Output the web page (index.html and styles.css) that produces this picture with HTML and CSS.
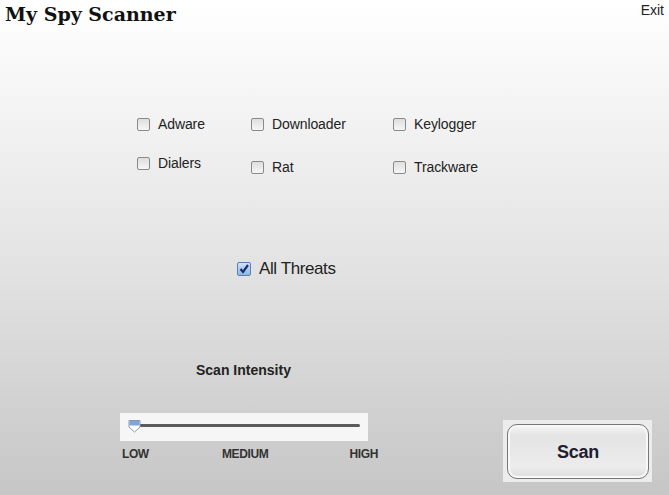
FILE: index.html
```html
<!DOCTYPE html>
<html lang="en">
<head>
    <meta charset="UTF-8">
    <meta name="viewport" content="width=device-width, initial-scale=1.0">
    <title>My Spy Scanner</title>
    <link rel="stylesheet" href="styles.css">
</head>
<body>
    <div class="page">
        <div class="top">
            <h1 class="title">My Spy Scanner</h1>
            <span class="exit">Exit</span>
        </div>

        <div class="threats">
            <label class="opt"><span class="box"></span>Adware</label>
            <label class="opt"><span class="box"></span>Downloader</label>
            <label class="opt"><span class="box"></span>Keylogger</label>
            <label class="opt raised"><span class="box"></span>Dialers</label>
            <label class="opt"><span class="box"></span>Rat</label>
            <label class="opt"><span class="box"></span>Trackware</label>
        </div>

        <label class="all">
            <span class="box checked">
                <svg width="10" height="10" viewBox="0 0 10 10"><path d="M1.5 5 L4 8 L9 1" fill="none" stroke="#1c2f6e" stroke-width="2.2"/></svg>
            </span>
            All Threats
        </label>

        <div class="intensity">Scan Intensity</div>

        <div class="bottom">
            <div class="slider">
                <div class="panel">
                    <div class="track"></div>
                    <svg class="thumb" width="13" height="14" viewBox="0 0 13 14">
                        <path d="M1 1.5 H12 V8 L6.5 13 L1 8 Z" fill="#fff" stroke="#8a97aa" stroke-width="1"/>
                        <path d="M1.5 2 H11.5 V6.5 H1.5 Z" fill="#7fa6dc"/>
                    </svg>
                </div>
                <div class="scale">
                    <span>LOW</span>
                    <span>MEDIUM</span>
                    <span class="high">HIGH</span>
                </div>
            </div>
            <div class="btn-wrap">
                <button class="scan">Scan</button>
            </div>
        </div>
    </div>
</body>
</html>
```

FILE: styles.css
```css
body {
    margin: 0;
    font-family: "Liberation Sans", Arial, sans-serif;
    color: #222;
}

.page {
    width: 669px;
    height: 495px;
    background: linear-gradient(#ffffff 0%, #f2f2f2 25%, #e2e2e2 55%, #c6c6c6 100%);
    overflow: hidden;
}

.top {
    display: flex;
    justify-content: space-between;
    height: 30px;
    padding: 0 5px;
}

.title {
    margin: 2px 0 0 0;
    font-family: "DejaVu Serif", "Liberation Serif", serif;
    font-weight: bold;
    font-size: 19px;
    line-height: 24px;
    color: #111;
}

.exit {
    margin-top: 2px;
    font-size: 14px;
    color: #222;
}

.threats {
    display: grid;
    grid-template-columns: 114px 142px auto;
    row-gap: 25px;
    margin: 85px 0 0 137px;
}

.opt {
    display: flex;
    align-items: center;
    gap: 8px;
    height: 18px;
    font-size: 14px;
    letter-spacing: -0.1px;
    color: #222;
}

.raised {
    margin-top: -4px;
}

.box {
    display: inline-flex;
    align-items: center;
    justify-content: center;
    box-sizing: border-box;
    width: 13px;
    height: 13px;
    border: 1px solid #8a8a8a;
    border-radius: 2px;
    background: linear-gradient(#dedede, #f6f6f6);
}

.box.checked {
    width: 14px;
    height: 14px;
    border-color: #5a7fb5;
    background: linear-gradient(#cfe3f8, #8fb6e6);
}

.all {
    display: flex;
    align-items: center;
    gap: 8px;
    height: 18px;
    margin: 84px 0 0 237px;
    font-size: 17px;
    letter-spacing: -0.4px;
    color: #222;
}

.intensity {
    margin: 84px 0 0 196px;
    height: 18px;
    font-size: 14px;
    font-weight: bold;
    color: #222;
}

.bottom {
    display: flex;
    align-items: flex-start;
    margin-top: 33px;
}

.slider {
    width: 248px;
    margin-left: 120px;
}

.panel {
    position: relative;
    height: 28px;
    background: #f6f6f6;
}

.track {
    position: absolute;
    left: 12px;
    right: 8px;
    top: 11px;
    height: 3px;
    border-radius: 2px;
    background: #5c5c5c;
}

.thumb {
    position: absolute;
    left: 8px;
    top: 6px;
}

.scale {
    display: grid;
    grid-template-columns: 100px auto 1fr;
    width: 256px;
    margin-top: 6px;
    padding-left: 2px;
    font-size: 12px;
    font-weight: bold;
    letter-spacing: -0.4px;
    color: #333;
}

.high {
    justify-self: end;
}

.btn-wrap {
    margin: 7px 0 0 135px;
    padding: 4px 3px 3px 4px;
    background: #ececec;
}

.scan {
    display: block;
    width: 142px;
    height: 55px;
    padding-top: 3px;
    border: 1px solid #777;
    border-radius: 10px;
    background: linear-gradient(#f6f6f6 0%, #e4e4e4 20%, #ececec 80%, #dcdcdc 100%);
    box-shadow: inset 0 0 0 2px #f8f8f8;
    font-family: "Liberation Sans", Arial, sans-serif;
    font-size: 18px;
    font-weight: bold;
    letter-spacing: -0.3px;
    color: #1e2030;
    cursor: pointer;
}
```
